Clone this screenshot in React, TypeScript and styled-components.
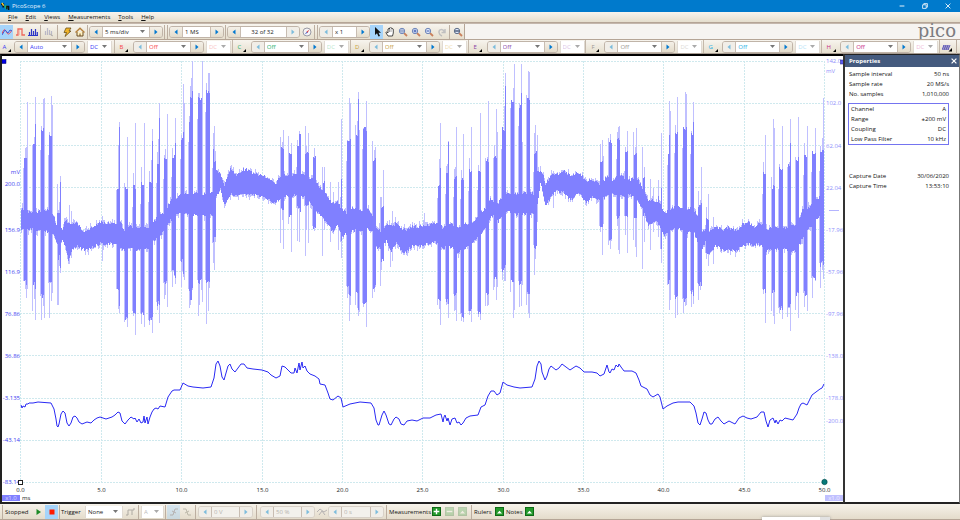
import React from "react";
import styled, { createGlobalStyle, css } from "styled-components";

const Global = createGlobalStyle`
  * { box-sizing: border-box; }
  html, body { margin: 0; padding: 0; }
  body, button, input, select {
    font-family: "Open Sans", "Noto Sans", sans-serif;
    font-size: 6px;
    line-height: 10px;
    color: #111;
  }
  button, input, select { margin: 0; padding: 0; border: 0; background: transparent; border-radius: 0; }
`;

const Page = styled.div`
  display: flex;
  flex-direction: column;
  min-height: 100vh;
  overflow: hidden;
  background: #f5f3ef;
`;

const TitleBar = styled.header`
  display: flex;
  align-items: center;
  height: 12px;
  padding: 0 2px 0 1px;
  gap: 2px;
  background: #007acc;
  color: #e4f2ff;
`;

const AppName = styled.h1`
  margin: 0;
  flex: 1;
  font-size: 6px;
  font-weight: 400;
`;

const WindowButton = styled.button`
  display: grid;
  place-items: center;
  width: 21px;
  height: 12px;
  color: #fff;
`;

const MenuBar = styled.nav`
  display: flex;
  align-items: center;
  height: 11px;
  padding-left: 5px;
  background: linear-gradient(#f7f4ee, #e5decd);
  border-bottom: 1px solid #b5a596;
`;

const MenuItem = styled.button`
  padding: 0 3px;
  margin-right: 2px;
  &::first-letter { text-decoration: underline; }
`;

const bar = css`
  display: flex;
  align-items: center;
`;

const MainToolbar = styled.div`
  ${bar}
  height: 16px;
  background: #f6f4f1;
  border-top: 1px solid #c4b7ac;
`;

const ToolStrip = styled.div`
  ${bar}
  height: 15px;
  background: linear-gradient(#f7f4ee, #e6dfce);
  border-right: 1px solid #b5a596;
`;

const Spacer = styled.div`
  flex: 1;
`;

const Brand = styled.div`
  align-self: flex-start;
  padding-right: 4px;
  font-family: "DejaVu Serif", serif;
  font-size: 18px;
  line-height: 13px;
  color: #7c7c80;
`;

const ToolButton = styled.button<{ $active?: boolean; $dim?: boolean }>`
  display: grid;
  place-items: center;
  width: 13px;
  height: 14px;
  flex: none;
  opacity: ${(p) => (p.$dim ? 0.4 : 1)};
  background: ${(p) => (p.$active ? "#a6d4fa" : "transparent")};
`;

const Separator = styled.div<{ $gap?: number }>`
  width: 1px;
  height: 14px;
  flex: none;
  margin: 0 ${(p) => p.$gap ?? 1}px;
  background: #bcaea0;
`;

const StepGroup = styled.div<{ $dim?: boolean }>`
  display: flex;
  height: 12px;
  flex: none;
  border: 1px solid ${(p) => (p.$dim ? "#d8d1c8" : "#c0b4a8")};
  border-radius: 3px;
  overflow: hidden;
`;

const StepButton = styled.button<{ $dim?: boolean }>`
  display: grid;
  place-items: center;
  width: 12px;
  background: ${(p) => (p.$dim ? "#f1eee8" : "linear-gradient(#f4f0e8, #e4dccb)")};
  color: ${(p) => (p.$dim ? "#7cbcdc" : "#0078d0")};
`;

const Field = styled.label<{ $w: number; $ink?: string; $plain?: boolean; $soft?: boolean }>`
  display: flex;
  align-items: center;
  width: ${(p) => p.$w}px;
  height: ${(p) => (p.$plain ? "12px" : "10px")};
  flex: none;
  padding: 0 4px 0 2px;
  background: ${(p) => (p.$soft ? "#f3f1ec" : "#fff")};
  border-left: 1px solid ${(p) => (p.$plain ? "#e0dad2" : "#c8bdb2")};
  border-right: 1px solid ${(p) => (p.$plain ? "#e0dad2" : "#c8bdb2")};
  color: ${(p) => p.$ink ?? "#222"};

  select, input {
    appearance: none;
    min-width: 0;
    width: 100%;
    flex: 1;
    height: 10px;
    color: inherit;
    outline: none;
  }
`;

const TextInput = styled.input<{ $center?: boolean }>`
  text-align: ${(p) => (p.$center ? "center" : "left")};
`;

const ChannelBar = styled.div`
  ${bar}
  height: 15px;
  background: linear-gradient(#f7f4ee, #e6dfce);
  border-top: 1px solid #b5a596;
  border-bottom: 1px solid #a89c92;
`;

const ChannelBlock = styled.div<{ $first?: boolean }>`
  display: flex;
  align-items: center;
  height: 13px;
  ${(p) => (p.$first ? "flex: none; width: 115px;" : "flex: 1;")}
  border-right: 1px solid #c4b8aa;
`;

const ChannelButton = styled.button<{ $ink: string; $first?: boolean }>`
  display: flex;
  align-items: flex-end;
  justify-content: center;
  gap: 2px;
  width: ${(p) => (p.$first ? 14 : 18)}px;
  color: ${(p) => p.$ink};
`;

const CouplingGap = styled.div`
  width: 2px;
`;

const Body = styled.main`
  display: flex;
  flex: 1;
  min-height: 0;
`;

const ChartFrame = styled.section`
  display: flex;
  flex: 1;
  min-width: 0;
  background: #fff;
  border: 2px solid #222;
  border-right: 0;
  border-top-color: #000;

  svg { display: block; width: 100%; height: auto; }
`;

const Panel = styled.aside`
  flex: none;
  width: 117px;
  background: #fff;
  border-left: 2px solid #333;
  border-right: 1px solid #777;
  border-bottom: 2px solid #222;
  border-top: 1px solid #222;
`;

const PanelHeader = styled.div`
  display: flex;
  align-items: center;
  justify-content: space-between;
  height: 12px;
  padding: 0 1px 0 4px;
  background: #445a7e;
  color: #fff;
`;

const PanelTitle = styled.h2`
  margin: 0;
  font-size: 6px;
  font-weight: 700;
`;

const CloseButton = styled.button`
  display: grid;
  place-items: center;
  width: 9px;
  height: 10px;
  color: #fff;
`;

const Facts = styled.dl<{ $boxed?: boolean; $top: number }>`
  margin: ${(p) => p.$top}px 10px 0 ${(p) => (p.$boxed ? 3 : 4)}px;
  padding: ${(p) => (p.$boxed ? "0 2px" : "0")};
  border: ${(p) => (p.$boxed ? "1px solid #7474f0" : "0")};
`;

const Fact = styled.div`
  display: flex;
  justify-content: space-between;
  height: 10px;
  dt, dd { margin: 0; }
`;

const StatusBar = styled.footer`
  ${bar}
  position: relative;
  height: 16px;
  background: linear-gradient(#f6f2ea, #e4dccb);
  border-bottom: 1px solid #b5a596;
`;

const StatusText = styled.span<{ $w: number }>`
  width: ${(p) => p.$w}px;
  flex: none;
`;

const GreenButton = styled.button<{ $dim?: boolean }>`
  display: grid;
  place-items: center;
  width: 9px;
  height: 9px;
  margin: 0 2px;
  background: #249a2c;
  border: 1px solid #0e6a16;
  opacity: ${(p) => (p.$dim ? 0.25 : 1)};
`;

const PeekingPopup = styled.div`
  position: absolute;
  right: 130px;
  bottom: -1px;
  width: 68px;
  height: 3px;
  background: linear-gradient(90deg, #fff 85%, #e2e2e2 85%);
  box-shadow: 0 0 3px #999;
`;

/* ---------- small glyphs ---------- */

const Left = () => (
  <svg width="4" height="6" viewBox="0 0 4 6" aria-hidden="true"><path d="M3.5 .5v5L.5 3z" fill="currentColor" /></svg>
);
const Right = () => (
  <svg width="4" height="6" viewBox="0 0 4 6" aria-hidden="true"><path d="M.5 .5v5L3.5 3z" fill="currentColor" /></svg>
);
const Caret = ({ pale }: { pale?: boolean }) => (
  <svg width="5" height="3" viewBox="0 0 5 3" aria-hidden="true"><path d="M0 0h5L2.5 3z" fill={pale ? "#aaa" : "#777"} /></svg>
);
const Corner = () => (
  <svg width="3" height="3" viewBox="0 0 3 3" aria-hidden="true"><path d="M3 0v3H0z" fill="#000" /></svg>
);

const Icon = ({ children, size = 10 }: { children: React.ReactNode; size?: number }) => (
  <svg width={size} height={size} viewBox="0 0 10 10" fill="none" aria-hidden="true">{children}</svg>
);

const Magnifier = ({ mark, ring = "#6f86b8" }: { mark: React.ReactNode; ring?: string }) => (
  <Icon>
    <path d="M5.8 5.8L9 9" stroke="#c9805c" strokeWidth="1.8" />
    <circle cx="4" cy="4" r="2.7" fill="#dbe6fa" stroke={ring} />
    {mark}
  </Icon>
);

type StepperProps = {
  label: string;
  value: string;
  width: number;
  combo?: boolean;
  center?: boolean;
  ink?: string;
  dimLeft?: boolean;
  dimRight?: boolean;
  off?: boolean;
};

function Stepper({ label, value, width, combo, center, ink, dimLeft, dimRight, off }: StepperProps) {
  return (
    <StepGroup $dim={off}>
      <StepButton aria-label={`${label}: previous`} $dim={dimLeft || off}><Left /></StepButton>
      <Field $w={width} $ink={off ? "#b5b2ae" : ink} $soft={off}>
        {combo ? (
          <>
            <select aria-label={label} defaultValue={value}><option>{value}</option></select>
            <Caret />
          </>
        ) : (
          <TextInput aria-label={label} defaultValue={value} $center={center} />
        )}
      </Field>
      <StepButton aria-label={`${label}: next`} $dim={dimRight || off}><Right /></StepButton>
    </StepGroup>
  );
}

const channels = [
  { id: "A", ink: "#3a3af5", pale: "#3a3af5", range: "Auto" },
  { id: "B", ink: "#f8474a", pale: "#f9c6c6", range: "Off" },
  { id: "C", ink: "#25b06a", pale: "#b9e6cc", range: "Off" },
  { id: "D", ink: "#c9a13a", pale: "#eedcae", range: "Off" },
  { id: "E", ink: "#8b3fa6", pale: "#dcc4e6", range: "Off" },
  { id: "F", ink: "#9b9792", pale: "#dcdad6", range: "Off" },
  { id: "G", ink: "#25aee6", pale: "#b8e4f6", range: "Off" },
  { id: "H", ink: "#c52c86", pale: "#efbcd8", range: "Off" },
];

/* ---------- signal data ---------- */

// Filled band: x, upper edge, lower edge.
const band: number[][] = [
  [21,208,230],[30,212,229],[50,209,231],[54,218,236],[57,228,243],[62,228,240],[65,220,245],[68,222,260],[72,224,248],[77,222,245],[82,231,249],[88,230,248],[95,224,246],[100,222,243],[107,223,243],[115,222,244],[120,222,247],[124,230,250],[130,226,248],[136,228,250],[142,227,248],[148,228,248],[153,222,240],[158,214,236],[164,213,230],[170,200,220],[176,197,214],[182,193,212],[188,193,214],[196,191,215],[204,194,216],[212,193,215],[216,170,196],[220,173,188],[224,184,205],[230,168,193],[236,175,196],[240,171,193],[245,168,194],[252,173,194],[260,174,196],[266,177,198],[275,184,202],[282,173,196],[290,176,196],[300,172,193],[308,177,200],[315,180,208],[320,188,215],[326,194,222],[332,203,231],[337,202,225],[341,208,235],[346,212,234],[352,207,230],[360,210,230],[368,208,228],[372,215,232],[376,227,246],[381,232,250],[386,224,240],[391,226,252],[396,222,242],[402,229,252],[406,229,251],[412,226,245],[420,226,246],[428,224,243],[436,222,242],[442,227,248],[450,223,246],[458,228,252],[466,223,247],[474,221,240],[480,213,235],[486,206,225],[490,198,218],[494,202,212],[498,203,222],[502,195,214],[508,192,210],[516,193,214],[524,192,214],[533,193,213],[537,172,205],[540,170,182],[543,176,195],[545,184,205],[551,174,196],[556,174,190],[563,170,192],[570,175,200],[578,172,192],[586,180,202],[592,180,196],[600,184,200],[606,176,196],[613,180,192],[620,174,196],[628,180,194],[636,176,198],[642,188,208],[648,200,225],[654,200,220],[659,202,224],[664,213,235],[670,208,230],[678,206,228],[686,208,232],[693,208,230],[697,215,240],[702,232,248],[706,228,240],[709,230,253],[715,226,245],[722,229,250],[728,227,250],[736,230,250],[742,224,245],[748,222,243],[754,226,244],[760,222,244],[765,229,250],[772,228,250],[780,228,248],[788,227,250],[796,224,250],[802,210,238],[808,208,228],[814,200,222],[820,195,215],[824,194,210],
];

// Dense pulses: first x, last x, top, bottom.
const pulses: number[][] = [
  [24,26,155,285],[33,34,142,287],[35,35,121,290],[41,43,128,300],[49,51,133,287],[57,57,210,246],[58,59,210,260],[60,60,180,270],
  [117,118,188,293],[119,119,123,306],[125,127,186,323],[133,135,185,315],[141,143,182,317],[149,151,180,324],[152,152,138,320],[157,158,161,306],[159,159,117,308],[164,166,157,287],[172,174,155,275],[175,175,139,280],[181,182,137,265],[183,183,131,275],[189,189,120,293],[190,191,94,303],[192,192,89,290],[198,201,97,284],[206,209,90,284],[213,213,146,247],[214,215,160,242],
  [281,283,147,213],[289,291,152,217],[297,298,145,212],[299,300,132,213],[305,308,150,210],[313,315,155,230],[323,324,180,216],[341,341,175,246],[347,348,139,290],[349,350,138,298],[356,357,133,296],[358,358,99,312],[363,366,127,307],[373,375,158,291],[381,383,205,263],
  [438,439,183,303],[440,440,167,305],[446,447,172,303],[448,448,142,308],[454,456,175,298],[461,463,177,318],[469,471,169,315],[478,480,168,315],[486,488,159,297],[494,496,155,280],[502,504,127,273],[505,505,84,271],[511,513,99,283],[519,521,104,285],[521,521,90,285],[527,529,97,298],[534,536,150,249],
  [600,602,159,230],[609,611,139,245],[617,619,137,220],[625,627,149,220],[634,636,151,220],[643,644,174,216],[658,658,193,230],[661,661,185,253],[668,668,154,284],[669,669,134,285],[675,677,131,299],[683,686,126,303],[691,692,132,295],[693,693,122,296],[698,701,203,287],[706,708,217,257],
  [763,765,172,293],[772,774,185,296],[779,782,167,312],[788,789,163,312],[790,790,140,305],[796,798,157,297],[804,806,153,297],[812,815,150,282],[820,823,149,267],
];

// Faint overshoot spikes: x, top, bottom.
const spikes: number[][] = [
  [23,168,265],[25,148,289],[26,147,298],[27,102,289],[32,145,311],[34,137,299],[35,97,320],[41,126,320],[43,99,306],[44,98,318],[49,132,318],[51,96,301],[52,105,293],[57,184,305],[58,210,305],[60,176,273],[66,217,250],[69,205,264],[71,211,258],
  [102,216,261],[116,190,281],[118,172,309],[119,122,313],[124,183,322],[127,137,327],[133,173,316],[135,123,335],[141,167,324],[144,123,327],[149,171,325],[152,129,333],[157,152,310],[159,103,323],[164,155,299],[165,149,295],[167,114,307],[172,148,287],[175,118,284],[181,135,287],[183,84,277],[184,103,280],[189,119,308],[190,86,305],[192,61,290],[191,78,297],[198,93,316],[199,93,305],[201,99,290],[202,61,302],[206,83,324],[208,73,311],[209,73,288],[213,133,263],[214,126,270],[215,151,242],
  [280,137,243],[283,130,249],[282,142,220],[288,136,224],[291,143,252],[297,140,241],[299,131,242],[305,126,256],[306,146,230],[308,133,243],[314,148,231],[322,167,256],[324,167,230],[330,182,242],[333,192,234],[338,182,250],[341,119,258],[347,140,298],[349,98,321],[350,103,305],[355,125,305],[358,92,316],[359,130,312],[363,128,307],[366,101,327],[372,141,298],[374,150,292],[375,147,284],[380,197,286],[381,197,270],[383,170,255],[390,226,267],[392,211,261],
  [424,213,248],[437,198,305],[439,159,309],[440,123,325],[446,166,305],[448,141,318],[454,169,311],[455,167,310],[456,127,321],[461,170,321],[463,134,322],[469,158,315],[471,127,322],[478,165,317],[480,113,320],[485,158,306],[487,157,306],[488,101,305],[493,158,290],[494,145,287],[496,109,300],[497,132,287],[502,133,280],[504,118,281],[505,73,281],[510,108,292],[513,88,318],[514,64,310],[519,103,307],[521,64,306],[522,142,285],[526,95,305],[528,71,313],[529,72,318],[534,133,275],[535,125,259],[537,135,222],[553,176,208],
  [600,144,232],[602,140,255],[603,156,224],[608,138,245],[610,134,249],[617,132,226],[618,127,250],[619,126,254],[625,147,235],[627,131,253],[633,132,240],[635,147,247],[636,128,257],[642,147,269],[644,167,242],[650,179,250],[653,188,232],[658,180,237],[661,133,263],[667,165,285],[669,101,310],[670,111,300],[675,125,318],[677,97,315],[683,127,313],[685,92,306],[686,94,305],[691,131,307],[693,102,304],[698,191,300],[700,200,290],[701,167,284],[706,207,259],[708,194,266],[713,217,264],
  [763,162,294],[765,135,323],[771,177,311],[773,119,316],[774,128,324],[779,164,313],[782,126,319],[787,167,317],[790,119,331],[795,157,310],[798,117,318],[804,143,307],[807,126,311],[812,151,298],[815,128,281],[820,146,288],[822,138,270],[823,98,279],
];

const trace =
  "21,405 22,408 23,406 25,407 26,404 28,404 29,403 33,403 38,402 51,403 54,409 56,419 57,426 58,427 59,424 61,414 63,411 65,413 67,423 69,426 71,423 73,417 75,416 77,418 79,422 82,424 87,422 91,423 94,420 97,418 100,417 106,419 112,417 115,415 118,412 120,413 122,421 125,424 128,420 131,417 134,419 135,418 137,422 139,419 141,423 143,422 144,416 145,423 147,417 148,424 150,417 152,412 154,409 156,408 158,409 160,406 165,407 168,397 172,391 174,390 180,390 183,383 188,386 193,387 203,388 211,387 214,378 216,364 218,361 220,366 222,377 224,380 226,373 228,366 230,364 232,369 235,372 238,368 241,364 244,364 247,368 253,369 262,370 268,372 271,375 276,378 280,376 282,366 285,367 289,371 291,373 294,373 295,368 297,373 299,363 300,370 302,362 303,368 305,366 307,371 310,374 315,376 319,379 320,384 325,385 328,393 330,399 333,400 338,396 341,398 343,407 350,404 360,402 371,403 374,408 376,420 378,425 379,425 382,415 384,411 386,415 389,424 391,425 394,419 396,417 399,419 401,424 404,425 407,421 412,420 417,421 423,418 430,418 436,415 441,414 443,422 444,417 445,415 447,421 448,418 450,425 452,419 455,418 457,423 459,422 461,425 463,423 466,418 470,416 478,415 481,407 485,405 488,396 491,391 494,391 497,395 500,393 503,382 507,385 514,387 520,388 532,387 535,379 537,366 539,361 541,364 542,372 545,380 547,376 549,369 551,366 556,370 559,368 562,364 566,367 570,370 576,366 580,368 584,372 592,372 597,373 600,376 604,374 607,365 609,372 610,373 612,369 614,370 616,365 618,367 619,364 621,367 624,371 632,371 636,373 639,380 641,386 647,389 650,395 653,397 658,394 660,397 663,409 667,406 673,403 678,402 690,402 694,406 696,413 698,423 700,425 702,419 704,412 706,413 708,420 710,424 712,424 715,419 718,417 721,421 724,424 729,421 735,424 739,418 743,416 747,418 751,419 757,417 761,412 764,412 766,421 768,427 770,420 773,418 775,423 776,420 778,424 780,420 782,421 785,418 793,420 797,414 799,408 801,404 803,403 807,405 812,395 816,392 820,389 822,388 824,384";

const noise = (x: number, seed: number) => {
  const v = Math.sin(x * 12.9898 + seed * 78.233) * 43758.5453;
  return v - Math.floor(v);
};

const bandPaths = (() => {
  let core = "";
  let fringe = "";
  let k = 0;
  for (let x = 21; x < 824; x++) {
    while (k < band.length - 2 && band[k + 1][0] <= x) k++;
    const [x0, t0, b0] = band[k];
    const [x1, t1, b1] = band[k + 1];
    const f = (x - x0) / (x1 - x0);
    const top = Math.round(t0 + (t1 - t0) * f - 1 + noise(x, 1) * 3);
    const bottom = Math.round(b0 + (b1 - b0) * f - 1 + noise(x, 2) * 3);
    core += `M${x} ${top}h1V${bottom}h-1z`;
    const up = Math.round(noise(x, 3) * noise(x, 4) * 6);
    const down = Math.round(noise(x, 5) * noise(x, 6) * 6);
    fringe += `M${x} ${top - up}h1V${bottom + down}h-1z`;
  }
  for (const [a, b, top, bottom] of pulses) {
    for (let x = a; x <= b; x++) {
      const t = top + Math.round(noise(x, 7) * 4);
      const l = bottom - Math.round(noise(x, 8) * 6);
      core += `M${x} ${t}h1V${l}h-1z`;
    }
    fringe += `M${a - 1} ${top + 22}h${b - a + 2}V${bottom - 4}h${a - b - 2}z`;
  }
  for (const [x, top, bottom] of spikes) fringe += `M${x} ${top}h1V${bottom}h-1z`;
  return { core, fringe };
})();

const columns = [20, 101, 181, 262, 342, 422, 503, 583, 663, 744, 824];
const rows = [61, 103, 145, 187, 229, 271, 313, 355, 398, 440, 482];
const leftLabels: [string, number][] = [["mV", 172], ["200.0", 184], ["156.9", 230], ["116.9", 272], ["76.86", 314], ["36.86", 356], ["-3.135", 398], ["-43.14", 440], ["-83.14", 482]];
const rightLabels: [string, number][] = [["142.0", 61], ["mV", 71], ["102.0", 103], ["62.04", 146], ["22.04", 188], ["-17.96", 230], ["-57.96", 272], ["-97.96", 314], ["-138.0", 356], ["-178.0", 398], ["-200.0", 421]];

const AxisText = styled.text<{ $ink: string }>`
  font-family: "Open Sans", "Noto Sans", sans-serif;
  font-size: 6px;
  fill: ${(p) => p.$ink};
`;

function Chart() {
  return (
    <svg viewBox="2 56 841 446" role="img" aria-label="Channel A voltage and filtered trace over 50 ms">
      <g stroke="#cfe9ee" strokeDasharray="2 1" shapeRendering="crispEdges">
        {columns.map((x) => <path key={x} d={`M${x + 0.5} 61V482`} />)}
        {rows.map((y) => <path key={y} d={`M20 ${y + 0.5}H825`} />)}
      </g>
      <g shapeRendering="crispEdges">
        <path d={bandPaths.fringe} fill="#c0c0ff" />
        <path d={bandPaths.core} fill="#8080ff" />
      </g>
      <polyline points={trace} fill="none" stroke="#2a2af4" strokeLinejoin="round" />
      {leftLabels.map(([t, y]) => <AxisText key={t} $ink="#3c3cf0" x="20" y={y + 2} textAnchor="end">{t}</AxisText>)}
      {rightLabels.map(([t, y]) => <AxisText key={t} $ink="#8f8ffb" x="826" y={y + 2}>{t}</AxisText>)}
      {columns.map((x, i) => <AxisText key={x} $ink="#222" x={x + 0.5} y="492" textAnchor="middle">{(i * 5).toFixed(1)}</AxisText>)}
      <path d="M829 210.5h10" stroke="#b4b4ff" />
      <rect x="2" y="59.5" width="4" height="4" fill="#0000e8" stroke="#000060" strokeWidth=".5" />
      <rect x="840.5" y="60" width="4" height="4" fill="#5a5af0" stroke="#22228a" strokeWidth=".5" />
      <rect x="18.5" y="480.5" width="4" height="4" fill="#fff" stroke="#222" />
      <circle cx="824.5" cy="482" r="2.7" fill="#087a7a" stroke="#044" strokeWidth=".6" />
      <rect x="2" y="495" width="18" height="6" fill="#8080ff" />
      <AxisText $ink="#d8d8ff" x="11" y="500" textAnchor="middle">x1.0</AxisText>
      <AxisText $ink="#222" x="22" y="500">ms</AxisText>
      <rect x="825" y="495" width="18" height="6" fill="#c0c0ff" />
      <AxisText $ink="#efefff" x="834" y="500" textAnchor="middle">x1.0</AxisText>
    </svg>
  );
}

const UpArrow = () => <svg width="5" height="4" viewBox="0 0 5 4" aria-hidden="true"><path d="M0 3.5h5L2.5 .8z" fill="#fff" /></svg>;

const sampleFacts = [["Sample interval", "50 ns"], ["Sample rate", "20 MS/s"], ["No. samples", "1,010,000"]];
const channelFacts = [["Channel", "A"], ["Range", "±200 mV"], ["Coupling", "DC"], ["Low Pass Filter", "10 kHz"]];
const captureFacts = [["Capture Date", "30/06/2020"], ["Capture Time", "13:53:10"]];

const FactList = ({ items, top, boxed }: { items: string[][]; top: number; boxed?: boolean }) => (
  <Facts $top={top} $boxed={boxed}>
    {items.map(([k, v]) => <Fact key={k}><dt>{k}</dt><dd>{v}</dd></Fact>)}
  </Facts>
);

export default function App() {
  return (
    <Page>
      <Global />
      <TitleBar>
        <Icon size={9}>
          <path d="M0 2.5h2.5V6" stroke="#111" strokeWidth="2" />
          <path d="M1 1l2 3" stroke="#ffd93b" strokeWidth="1.5" />
          <path d="M4 5h2v3" stroke="#2fc04f" strokeWidth="2" />
          <path d="M6.500 8V5h2v4" stroke="#111" strokeWidth="1.500" />
        </Icon>
        <AppName>PicoScope 6</AppName>
        <WindowButton aria-label="Minimise"><Icon size={6}><path d="M1 5h8" stroke="currentColor" strokeWidth="1.5" /></Icon></WindowButton>
        <WindowButton aria-label="Restore"><Icon size={6}><path d="M1 3h6v6H1zM3 3V1h6v6H7" stroke="currentColor" strokeWidth="1.3" /></Icon></WindowButton>
        <WindowButton aria-label="Close"><Icon size={6}><path d="M1 1l8 8M9 1L1 9" stroke="currentColor" strokeWidth="1.4" /></Icon></WindowButton>
      </TitleBar>

      <MenuBar>
        {["File", "Edit", "Views", "Measurements", "Tools", "Help"].map((m) => <MenuItem key={m}>{m}</MenuItem>)}
      </MenuBar>

      <MainToolbar>
        <ToolStrip>
          <ToolButton $active aria-label="Scope mode"><Icon><path d="M0 7C2 1 3 2 4.500 5S7 8 10 3" stroke="#e8485a" /><path d="M0 8l3-5 3 3 2-3 2 1" stroke="#3a5fe0" /></Icon></ToolButton>
          <ToolButton aria-label="Persistence mode"><Icon><path d="M1 8h2V2h4v6h3" stroke="#f0685c" strokeWidth="1.300" /><path d="M4 3v5" stroke="#f0a090" /></Icon></ToolButton>
          <ToolButton aria-label="Spectrum mode"><Icon><path d="M1.500 9V5M3.500 9V2M5.500 9V4M7.500 9V2M9.300 9V5M0 8.500h10" stroke="#2a35c8" strokeWidth="1.200" /></Icon></ToolButton>
          <Separator />
          <ToolButton $dim aria-label="Spectrum options"><Icon><path d="M1.500 8V4M3.500 8V1M5.500 8V3M7.500 9V4" stroke="#6d70a8" strokeWidth="1.200" /><path d="M6 7l3 2" stroke="#666" /></Icon></ToolButton>
          <Separator $gap={2} />
          <ToolButton aria-label="Auto setup"><Icon><path d="M4 1h5L7 4h2L3 9.500 4.500 5.500H2z" fill="#f0b429" stroke="#5b4310" strokeWidth=".7" /></Icon></ToolButton>
          <ToolButton aria-label="Home"><Icon><path d="M2 5v4h6V5" fill="#fff1c0" stroke="#6a4a20" /><path d="M.5 5.500L5 1.200l4.500 4.300" stroke="#b5803a" strokeWidth="1.400" /><path d="M5 9V6.500" stroke="#6a4a20" /></Icon></ToolButton>
          <Separator $gap={1} />
          <Stepper label="Timebase" value="5 ms/div" width={48} combo />
          <Separator $gap={1} />
          <Separator $gap={1} />
          <Stepper label="Samples" value="1 MS" width={29} />
          <Separator $gap={1} />
          <Stepper label="Buffer" value="32 of 32" width={47} center dimRight />
          <ToolButton aria-label="Buffer overview"><Icon><circle cx="5" cy="5" r="4" fill="#f4f4f6" stroke="#9a9aa4" /><path d="M2.500 7.500L5 4.500l1 1z" fill="#4a62c8" /><path d="M7.500 2.500L4.500 4.800l1 1z" fill="#e23b3b" /></Icon></ToolButton>
          <Separator $gap={1} />
          <Separator $gap={1} />
          <Stepper label="Horizontal zoom" value="x 1" width={25} dimLeft />
          <ToolButton $active aria-label="Selection tool"><Icon><path d="M3 0v8l2-1.800L6.500 9.500 8 9 6.500 5.700H9z" fill="#111" /></Icon></ToolButton>
          <ToolButton aria-label="Hand tool"><Icon><path d="M3 9L.8 5.500l1-.5L3 6V2l1-.5.500.5V1l1-.3.500.5L7 1l.5 1 .8.2V6L7.500 9z" fill="#fff" stroke="#222" strokeWidth=".8" /><path d="M4.500 2v3M6 2v3" stroke="#444" strokeWidth=".5" /></Icon></ToolButton>
          <ToolButton aria-label="Marquee zoom"><Magnifier mark={<path d="M2.800 3h2.400v2H2.800z" stroke="#54699c" strokeWidth=".6" />} /></ToolButton>
          <ToolButton aria-label="Zoom in"><Magnifier mark={<path d="M2.500 4h3M4 2.500v3" stroke="#3c5ab0" />} /></ToolButton>
          <ToolButton aria-label="Zoom out"><Magnifier mark={<path d="M2.500 4h3" stroke="#3c5ab0" />} /></ToolButton>
          <ToolButton $dim aria-label="Undo zoom"><Icon><path d="M8 2v3.500H4.500M7.500 5C6 1.500 1.500 2 2 5.500 2.300 7.500 3.500 8.500 5 9" stroke="#7d8496" strokeWidth="1.500" /></Icon></ToolButton>
          <Separator $gap={1} />
          <ToolButton aria-label="Zoom to full view"><Magnifier ring="#5f6f88" mark={<path d="M1.800 4h4.400M3 3v2M5 3v2" stroke="#3d4c6a" strokeWidth=".8" />} /></ToolButton>
        </ToolStrip>
        <Spacer />
        <Brand>pico</Brand>
      </MainToolbar>

      <ChannelBar>
        {channels.map((c, i) => (
          <ChannelBlock key={c.id} $first={i === 0}>
            <ChannelButton $ink={c.ink} $first={i === 0} aria-label={`Channel ${c.id} options`}>{c.id}<Corner /></ChannelButton>
            <Stepper label={`Channel ${c.id} range`} value={c.range} width={45} combo ink={c.ink} dimLeft={i > 0} />
            <CouplingGap />
            <Field $w={25} $plain $ink={c.pale}>
              <select aria-label={`Channel ${c.id} coupling`} defaultValue="DC"><option>DC</option></select>
              <Caret pale={i > 0} />
            </Field>
          </ChannelBlock>
        ))}
        <ToolButton aria-label="Digital channels"><Icon><path d="M0 8l2-5v5l2-5v5l2-5v5l2-5" stroke="#5e58b8" /><path d="M10 6v3.500H6.500z" fill="#000" /></Icon></ToolButton>
        <Separator $gap={3} />
      </ChannelBar>

      <Body>
        <ChartFrame><Chart /></ChartFrame>
        <Panel>
          <PanelHeader>
            <PanelTitle>Properties</PanelTitle>
            <CloseButton aria-label="Close properties"><Icon size={6}><path d="M1 1l8 8M9 1L1 9" stroke="currentColor" strokeWidth="2" /></Icon></CloseButton>
          </PanelHeader>
          <FactList items={sampleFacts} top={2} />
          <FactList items={channelFacts} top={4} boxed />
          <FactList items={captureFacts} top={26} />
        </Panel>
      </Body>

      <StatusBar>
        <Separator $gap={2} />
        <StatusText $w={27}>Stopped</StatusText>
        <ToolButton aria-label="Start"><Icon><path d="M2.500 2v6L7 5z" fill="#1c8a26" /></Icon></ToolButton>
        <ToolButton $active aria-label="Stop"><Icon><path d="M2.500 2.500h5v5h-5z" fill="#ff1a00" /></Icon></ToolButton>
        <Separator />
        <StatusText $w={24}>Trigger</StatusText>
        <Field $w={38} $plain>
          <select aria-label="Trigger mode" defaultValue="None"><option>None</option></select>
          <Caret />
        </Field>
        <ToolButton $dim aria-label="Advanced triggers"><Icon><path d="M1 8h2V3h4v5M7 3h2V1" stroke="#555" /></Icon></ToolButton>
        <Separator $gap={2} />
        <Field $w={23} $plain $ink="#bbb">
          <select aria-label="Trigger source" defaultValue="A"><option>A</option></select>
          <Caret pale />
        </Field>
        <Separator />
        <ToolButton $active $dim aria-label="Rising edge"><Icon><path d="M1 8h3l2-6h3M3 4l4 2" stroke="#667" /></Icon></ToolButton>
        <ToolButton $dim aria-label="Falling edge"><Icon><path d="M1 2h3l2 6h3M3 6l4-2" stroke="#776" /></Icon></ToolButton>
        <Separator $gap={2} />
        <Stepper label="Threshold" value="0 V" width={29} off />
        <Separator $gap={3} />
        <Stepper label="Pre-trigger" value="50 %" width={29} off />
        <ToolButton $dim aria-label="Trigger delay"><Icon><path d="M0 5l3-3 4 3 3-2M2 8l3-4 3 4" stroke="#667" /></Icon></ToolButton>
        <Stepper label="Delay" value="0 s" width={30} off />
        <Separator $gap={2} />
        <StatusText $w={41}>Measurements</StatusText>
        <GreenButton aria-label="Add measurement"><Icon size={7}><path d="M1 5h8M5 1v8" stroke="#fff" strokeWidth="2" /></Icon></GreenButton>
        <GreenButton $dim aria-label="Delete measurement"><Icon size={7}><path d="M1 5h8" stroke="#fff" strokeWidth="2" /></Icon></GreenButton>
        <GreenButton $dim aria-label="Edit measurement"><UpArrow /></GreenButton>
        <Separator $gap={2} />
        <StatusText $w={19}>Rulers</StatusText>
        <GreenButton aria-label="Show rulers"><UpArrow /></GreenButton>
        <StatusText $w={17}>Notes</StatusText>
        <GreenButton aria-label="Show notes"><UpArrow /></GreenButton>
        <PeekingPopup />
      </StatusBar>
    </Page>
  );
}
